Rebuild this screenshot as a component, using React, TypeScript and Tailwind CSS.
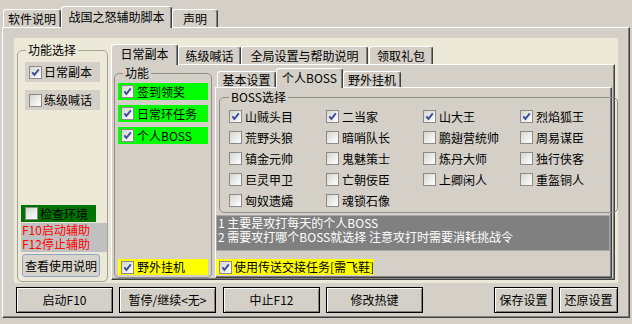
import React from "react";

function Check({ checked = false }: { checked?: boolean }) {
  return (
    <span className="relative inline-block w-[13px] h-[13px] shrink-0 border border-[#8a8a8a] bg-linear-to-br from-[#d6d6d0] to-white">
      {checked && (
        <svg className="absolute left-0 top-0" width="11" height="11" viewBox="0 0 11 11">
          <path d="M2.3 5.3 L4.4 7.9 L8.8 2.3" stroke="#3b4f9f" strokeWidth="1.9" fill="none" />
        </svg>
      )}
    </span>
  );
}

function Tab({ label, active = false, cls }: { label: string; active?: boolean; cls: string }) {
  return (
    <div
      className={
        "flex items-center justify-center bg-[#d4d0c8] border-t border-l border-r border-t-white border-l-white border-r-[#404040] shadow-[inset_-1px_0_0_#808080] rounded-t-[3px] whitespace-nowrap " +
        (active ? "relative z-10 -mb-px pb-[2px] " : "") +
        cls
      }
    >
      {label}
    </div>
  );
}

function Btn({ label, cls }: { label: string; cls: string }) {
  return (
    <div
      className={
        "flex items-center justify-center h-[26px] bg-[#d4d0c8] border border-black shadow-[inset_1px_1px_0_#ffffff,inset_-1px_-1px_0_#808080] whitespace-nowrap " +
        cls
      }
    >
      {label}
    </div>
  );
}

function BossItem({ name, checked = false }: { name: string; checked?: boolean }) {
  return (
    <div className="flex items-center h-[21px] gap-[3px] whitespace-nowrap">
      <Check checked={checked} />
      <span>{name}</span>
    </div>
  );
}

const bosses: [string, boolean][] = [
  ["山贼头目", true],
  ["二当家", true],
  ["山大王", true],
  ["烈焰狐王", true],
  ["荒野头狼", false],
  ["暗哨队长", false],
  ["鹏翅营统帅", false],
  ["周易谋臣", false],
  ["镇金元帅", false],
  ["鬼魅策士", false],
  ["炼丹大师", false],
  ["独行侠客", false],
  ["巨灵甲卫", false],
  ["亡朝佞臣", false],
  ["上卿闲人", false],
  ["重盔铜人", false],
  ["匈奴遗孀", false],
  ["魂锁石像", false],
];

const PAGE =
  "bg-[#d4d0c8] border border-t-white border-l-white border-r-[#404040] border-b-[#404040] shadow-[inset_-1px_-1px_0_#808080]";

export default function App() {
  return (
    <div className="w-[632px] h-[324px] overflow-hidden bg-[#d4d0c8] px-[2px] pt-[6px] text-[12px] leading-[16px] text-black font-['Noto_Sans_CJK_SC','Noto_Sans',sans-serif]">
      {/* top tabs */}
      <div className="flex items-end h-[21px] ml-px">
        <Tab label="软件说明" cls="w-[58px] h-[18px]" />
        <Tab label="战国之怒辅助脚本" active cls="w-[111px] h-[22px]" />
        <Tab label="声明" cls="w-[46px] h-[18px]" />
      </div>
      {/* outer page */}
      <div className={"w-[628px] h-[291px] flex flex-col " + PAGE}>
        {/* light panel */}
        <div className="ml-[11px] mt-[10px] w-[604px] h-[245px] bg-[#ece9d8] flex items-start">
          {/* 功能选择 group */}
          <fieldset className="ml-[3px] mt-[4px] w-[90px] h-[240px] border border-[#a3a398] rounded-[5px]">
            <legend className="ml-[8px] px-[2px] leading-[16px]">功能选择</legend>
            <div className="h-[223px] flex flex-col">
              <div className="mt-[4px] ml-[7px] w-[75px] h-[20px] bg-[#d4d0c8] flex items-center pl-[4px] gap-[2px]">
                <Check checked />
                <span>日常副本</span>
              </div>
              <div className="mt-[8px] ml-[7px] w-[75px] h-[20px] bg-[#d4d0c8] flex items-center pl-[4px] gap-[2px]">
                <Check />
                <span>练级喊话</span>
              </div>
              <div className="mt-auto ml-[3px] w-[75px] h-[17px] bg-[#007400] flex items-center pl-[4px] gap-[2px]">
                <Check />
                <span>检查环境</span>
              </div>
              <div className="mt-px ml-[3px] w-[86px] h-[29px] bg-[#c0c0c0] pl-px text-[#ff0000] leading-[14px]">
                <div>F10启动辅助</div>
                <div>F12停止辅助</div>
              </div>
              <div className="mt-[2px] mb-[4px] ml-[4px] w-[78px] h-[23px] flex items-center justify-center border border-[#8ea6c6] rounded-[3px] bg-[#d8d4cc]">
                查看使用说明
              </div>
            </div>
          </fieldset>

          {/* second tab control */}
          <div className="ml-[3px] mt-[6px] w-[504px] flex flex-col">
            <div className="flex items-end h-[20px]">
              <Tab label="日常副本" active cls="w-[67px] h-[21px]" />
              <Tab label="练级喊话" cls="w-[63px] h-[18px]" />
              <Tab label="全局设置与帮助说明" cls="w-[127px] h-[18px]" />
              <Tab label="领取礼包" cls="ml-px w-[64px] h-[18px]" />
            </div>
            <div className={"h-[216px] flex items-start " + PAGE}>
              {/* 功能 group */}
              <fieldset className="ml-[2px] w-[98px] h-[213px] border border-[#8f8f8a] rounded-[5px]">
                <legend className="ml-[8px] px-[2px] leading-[16px]">功能</legend>
                <div className="h-[195px] flex flex-col">
                  <div className="mt-[2px] ml-[3px] w-[90px] h-[17px] bg-[#00ff00] flex items-center pl-[3px] gap-[3px]">
                    <Check checked />
                    <span>签到领奖</span>
                  </div>
                  <div className="mt-[5px] ml-[3px] w-[90px] h-[17px] bg-[#00ff00] flex items-center pl-[3px] gap-[3px]">
                    <Check checked />
                    <span>日常环任务</span>
                  </div>
                  <div className="mt-[5px] ml-[3px] w-[90px] h-[17px] bg-[#00ff00] flex items-center pl-[3px] gap-[3px]">
                    <Check checked />
                    <span>个人BOSS</span>
                  </div>
                  <div className="mt-auto mb-px ml-[3px] w-[90px] h-[16px] bg-[#ffff00] flex items-center pl-[3px] gap-[3px]">
                    <Check checked />
                    <span>野外挂机</span>
                  </div>
                </div>
              </fieldset>

              {/* third tab control */}
              <div className="ml-[3px] mt-[3px] w-[397px] flex flex-col">
                <div className="flex items-end h-[19px] pl-[2px]">
                  <Tab label="基本设置" cls="w-[59px] h-[16px]" />
                  <Tab label="个人BOSS" active cls="w-[67px] h-[20px]" />
                  <Tab label="野外挂机" cls="w-[58px] h-[16px]" />
                </div>
                <div className={"h-[191px] flex flex-col " + PAGE}>
                  <fieldset className="ml-[3px] mt-px w-[389px] h-[124px] border border-[#8f8f8a] rounded-[5px]">
                    <legend className="ml-[9px] px-[2px] leading-[16px]">BOSS选择</legend>
                    <div className="mt-px pl-[9px] grid grid-cols-[97px_97px_97px_97px]">
                      {bosses.map(([n, c]) => (
                        <BossItem key={n} name={n} checked={c} />
                      ))}
                    </div>
                  </fieldset>
                  <div className="mt-[2px] w-[394px] h-[36px] bg-[#808080] border border-[#a8a8a8] text-white leading-[14px] pl-px whitespace-pre">
                    <div>1 主要是攻打每天的个人BOSS</div>
                    <div>2 需要攻打哪个BOSS就选择 注意攻打时需要消耗挑战令</div>
                  </div>
                  <div className="mt-[8px] w-[158px] h-[16px] bg-[#ffff00] flex items-center pl-[3px] gap-[2px] whitespace-nowrap">
                    <Check checked />
                    <span>使用传送交接任务[需飞鞋]</span>
                  </div>
                </div>
              </div>
            </div>
          </div>
        </div>

        {/* bottom buttons */}
        <div className="mt-[4px] ml-[13px] flex">
          <Btn label="启动F10" cls="w-[97px]" />
          <Btn label="暂停/继续<无>" cls="ml-[6px] w-[97px]" />
          <Btn label="中止F12" cls="ml-[7px] w-[97px]" />
          <Btn label="修改热键" cls="ml-[6px] w-[97px]" />
          <Btn label="保存设置" cls="ml-[71px] w-[59px]" />
          <Btn label="还原设置" cls="ml-[6px] w-[59px]" />
        </div>
      </div>
    </div>
  );
}
